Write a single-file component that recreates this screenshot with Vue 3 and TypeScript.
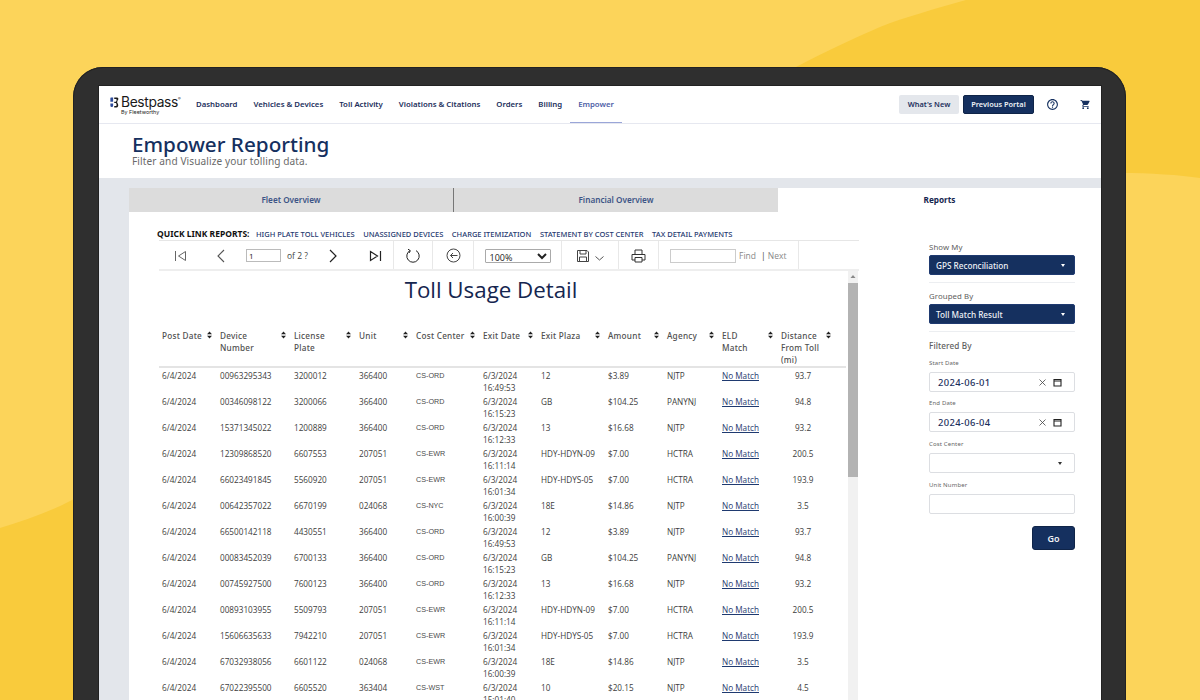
<script setup lang="ts">
interface Row {
  device: string; plate: string; unit: string; center: string; time: string;
  plaza: string; amount: string; agency: string; distance: string;
}
const nav: string[] = ['Dashboard', 'Vehicles & Devices', 'Toll Activity', 'Violations & Citations', 'Orders', 'Billing'];
const quickLinks: string[] = ['High Plate Toll Vehicles', 'Unassigned Devices', 'Charge Itemization', 'Statement by Cost Center', 'Tax Detail Payments'];
const columns: { label: string; cls: string }[] = [
  { label: 'Post Date', cls: 'c1' }, { label: 'Device Number', cls: 'c2' }, { label: 'License Plate', cls: 'c3' },
  { label: 'Unit', cls: 'c4' }, { label: 'Cost Center', cls: 'c5' }, { label: 'Exit Date', cls: 'c6' },
  { label: 'Exit Plaza', cls: 'c7' }, { label: 'Amount', cls: 'c8' }, { label: 'Agency', cls: 'c9' },
  { label: 'ELD Match', cls: 'c10' }, { label: 'Distance From Toll (mi)', cls: 'c11' },
];
const r = (device: string, plate: string, unit: string, center: string, time: string, plaza: string, amount: string, agency: string, distance: string): Row =>
  ({ device, plate, unit, center, time, plaza, amount, agency, distance });
const rows: Row[] = [
  r('00963295343', '3200012', '366400', 'CS-ORD', '16:49:53', '12', '$3.89', 'NJTP', '93.7'),
  r('00346098122', '3200066', '366400', 'CS-ORD', '16:15:23', 'GB', '$104.25', 'PANYNJ', '94.8'),
  r('15371345022', '1200889', '366400', 'CS-ORD', '16:12:33', '13', '$16.68', 'NJTP', '93.2'),
  r('12309868520', '6607553', '207051', 'CS-EWR', '16:11:14', 'HDY-HDYN-09', '$7.00', 'HCTRA', '200.5'),
  r('66023491845', '5560920', '207051', 'CS-EWR', '16:01:34', 'HDY-HDYS-05', '$7.00', 'HCTRA', '193.9'),
  r('00642357022', '6670199', '024068', 'CS-NYC', '16:00:39', '18E', '$14.86', 'NJTP', '3.5'),
  r('66500142118', '4430551', '366400', 'CS-ORD', '16:49:53', '12', '$3.89', 'NJTP', '93.7'),
  r('00083452039', '6700133', '366400', 'CS-ORD', '16:15:23', 'GB', '$104.25', 'PANYNJ', '94.8'),
  r('00745927500', '7600123', '366400', 'CS-ORD', '16:12:33', '13', '$16.68', 'NJTP', '93.2'),
  r('00893103955', '5509793', '207051', 'CS-EWR', '16:11:14', 'HDY-HDYN-09', '$7.00', 'HCTRA', '200.5'),
  r('15606635633', '7942210', '207051', 'CS-EWR', '16:01:34', 'HDY-HDYS-05', '$7.00', 'HCTRA', '193.9'),
  r('67032938056', '6601122', '024068', 'CS-EWR', '16:00:39', '18E', '$14.86', 'NJTP', '3.5'),
  r('67022395500', '6605520', '363404', 'CS-WST', '15:01:40', '10', '$20.15', 'NJTP', '4.5'),
];
</script>

<template>
  <div class="stage">
    <svg class="backdrop" width="1200" height="700" viewBox="0 0 1200 700" aria-hidden="true">
      <path d="M0 0H966C935 9 905 17 880 27C850 40 822 53 796 67L780 130L72 500C50 512 25 520 0 528Z" fill="#fcd45a" />
      <path d="M1120 173C1150 173 1180 175 1200 178V700H1120Z" fill="#fcd45a" />
    </svg>

    <div class="device">
      <div class="screen">
        <header class="topbar">
          <div class="logo">
            <svg class="logo-mark" width="9" height="11" viewBox="0 0 9 12" aria-hidden="true">
              <path d="M0 1.200Q0 .5 .7 .5H3V5.200H0zM0 7h3v2.500Q3 11 1.500 11T0 9.500z" fill="#2c4a9a" />
              <path d="M4.200.5H7c2 0 2.200 2.200 1 3L7.300 5.700 8.300 7.600C9.200 9.600 8 11.500 6.600 11.500H4.200V9.800H6.300C7 9.800 7 7.200 6 6.600H4.200V5.100H6C7 4.600 7 2.200 6.300 2.200H4.200Z" fill="#1a1a1a" />
            </svg>
            <div class="logo-words">
              <span class="logo-name">Bestpass<sup>®</sup></span>
              <span class="logo-by">By Fleetworthy</span>
            </div>
          </div>
          <nav class="nav">
            <a v-for="item in nav" :key="item" class="nav-item">{{ item }}</a>
            <a class="nav-item active">Empower</a>
          </nav>
          <div class="actions">
            <button class="btn-light">What's New</button>
            <button class="btn-navy">Previous Portal</button>
            <svg class="help" width="13" height="13" viewBox="0 0 24 24" fill="#15305f" aria-hidden="true">
              <path d="M11 18h2v-2h-2v2zm1-16C6.480 2 2 6.480 2 12s4.480 10 10 10 10-4.480 10-10S17.520 2 12 2zm0 18c-4.410 0-8-3.590-8-8s3.590-8 8-8 8 3.590 8 8-3.590 8-8 8zm0-14c-2.210 0-4 1.790-4 4h2c0-1.100.9-2 2-2s2 .9 2 2c0 2-3 1.750-3 5h2c0-2.250 3-2.500 3-5 0-2.210-1.790-4-4-4z" />
            </svg>
            <svg class="cart" width="11" height="11" viewBox="0 0 24 24" fill="#15305f" aria-hidden="true">
              <path d="M7 18c-1.100 0-1.990.9-1.990 2S5.900 22 7 22s2-.9 2-2-.9-2-2-2zM1 2v2h2l3.600 7.590-1.350 2.450c-.16.28-.25.61-.25.96 0 1.100.9 2 2 2h12v-2H7.420c-.14 0-.25-.11-.25-.25l.03-.12.9-1.630h7.450c.75 0 1.410-.41 1.750-1.030l3.580-6.490c.08-.14.12-.31.12-.48 0-.55-.45-1-1-1H5.210l-.94-2H1zm16 16c-1.100 0-1.990.9-1.990 2s.89 2 1.990 2 2-.9 2-2-.9-2-2-2z" />
            </svg>
          </div>
        </header>

        <section class="title-band">
          <h1>Empower Reporting</h1>
          <p>Filter and Visualize your tolling data.</p>
        </section>

        <div class="body">
          <div class="sheet">
            <div class="tabs">
              <div class="tab tab-one">Fleet Overview</div>
              <div class="tab tab-two">Financial Overview</div>
              <div class="tab tab-active">Reports</div>
            </div>

            <div class="content">
              <div class="report-col">
                <div class="quick">
                  <strong>QUICK LINK REPORTS:</strong>
                  <a v-for="l in quickLinks" :key="l">{{ l }}</a>
                </div>

                <div class="toolbar">
                  <div class="cell pager">
                    <svg class="t-first" width="13" height="12" viewBox="0 0 13 12" aria-hidden="true"><path d="M1.500 1v10M11.500 1.500L4.500 6l7 4.500z" fill="none" stroke="#666" /></svg>
                    <svg class="t-prev" width="10" height="14" viewBox="0 0 10 14" aria-hidden="true"><path d="M8 1L2 7l6 6" fill="none" stroke="#555" stroke-width="1.100" /></svg>
                    <input class="page-input" value="1" aria-label="Page" />
                    <span class="of">of 2 ?</span>
                    <svg class="t-next" width="10" height="14" viewBox="0 0 10 14" aria-hidden="true"><path d="M2 1l6 6-6 6" fill="none" stroke="#222" stroke-width="1.200" /></svg>
                    <svg class="t-last" width="13" height="12" viewBox="0 0 13 12" aria-hidden="true"><path d="M1.500 1.500l7 4.500-7 4.500zM11.500 1v10" fill="none" stroke="#222" stroke-width="1.200" /></svg>
                  </div>
                  <div class="cell w39">
                    <svg width="16" height="16" viewBox="0 0 16 16" aria-hidden="true"><path d="M5 2.600A6.200 6.200 0 1 0 11 2.600M3 1.200L5.400 2.700 4 5" fill="none" stroke="#222" /></svg>
                  </div>
                  <div class="cell w41">
                    <svg width="15" height="15" viewBox="0 0 15 15" aria-hidden="true"><circle cx="7.500" cy="7.500" r="6.500" fill="none" stroke="#444" /><path d="M11.500 7.500h-7M7 5L4.500 7.500 7 10" fill="none" stroke="#444" /></svg>
                  </div>
                  <div class="cell w88">
                    <select class="zoom" aria-label="Zoom"><option>100%</option></select>
                  </div>
                  <div class="cell w57">
                    <svg width="14" height="14" viewBox="0 0 14 14" aria-hidden="true"><path d="M1.500 1.500h9.500l1.500 1.500v9.500h-11zM4 1.500v3.500h6V1.500M3.500 12.500V8h7v4.500" fill="none" stroke="#444" /></svg>
                    <svg class="chev" width="9" height="5" viewBox="0 0 9 5" aria-hidden="true"><path d="M.5.5l4 3.500 4-3.500" fill="none" stroke="#555" /></svg>
                  </div>
                  <div class="cell w40">
                    <svg width="15" height="14" viewBox="0 0 15 14" aria-hidden="true"><path d="M4 5V1h7v4M4 11H1V5.500h13V11h-3M4 8.500h7v4.500H4z" fill="none" stroke="#333" /></svg>
                  </div>
                  <div class="cell find">
                    <input class="find-input" aria-label="Find" />
                    <span class="find-text">Find</span>
                    <span class="find-next"><i>|</i> Next</span>
                  </div>
                </div>

                <div class="report">
                  <div class="report-main">
                    <h2>Toll Usage Detail</h2>
                    <table>
                      <colgroup>
                        <col v-for="c in columns" :key="c.cls" :class="c.cls" />
                      </colgroup>
                      <thead>
                        <tr>
                          <th v-for="c in columns" :key="c.label" :class="c.cls">
                            <div class="th-in">
                              <span>{{ c.label }}</span>
                              <svg width="5" height="8" viewBox="0 0 5 8" aria-hidden="true"><path d="M2.500.5L5 3.200H0zM2.500 7.500L0 4.800h5z" fill="#222" /></svg>
                            </div>
                          </th>
                        </tr>
                      </thead>
                      <tbody>
                        <tr v-for="row in rows" :key="row.device">
                          <td>6/4/2024</td>
                          <td>{{ row.device }}</td>
                          <td>{{ row.plate }}</td>
                          <td>{{ row.unit }}</td>
                          <td class="center-code">{{ row.center }}</td>
                          <td>6/3/2024<br />{{ row.time }}</td>
                          <td>{{ row.plaza }}</td>
                          <td>{{ row.amount }}</td>
                          <td>{{ row.agency }}</td>
                          <td><a class="match">No Match</a></td>
                          <td class="dist">{{ row.distance }}</td>
                        </tr>
                      </tbody>
                    </table>
                  </div>
                  <div class="scrollbar">
                    <svg width="10" height="11" viewBox="0 0 10 11" aria-hidden="true"><path d="M5 4l2.500 3h-5z" fill="#888" /></svg>
                    <div class="thumb"></div>
                  </div>
                </div>
              </div>

              <aside class="filters">
                <label class="lbl">Show My</label>
                <div class="select navy"><span>GPS Reconciliation</span><b class="caret"></b></div>
                <div class="rule"></div>
                <label class="lbl">Grouped By</label>
                <div class="select navy"><span>Toll Match Result</span><b class="caret"></b></div>
                <div class="rule"></div>
                <div class="lbl filtered">Filtered By</div>
                <label class="tiny first">Start Date</label>
                <div class="select date">
                  <span>2024-06-01</span>
                  <svg class="x" width="7" height="7" viewBox="0 0 7 7" aria-hidden="true"><path d="M.5.5l6 6M6.500.5l-6 6" stroke="#444" stroke-width=".8" /></svg>
                  <svg width="9" height="9" viewBox="0 0 9 9" aria-hidden="true"><path d="M1 1.500h7v6.500H1zM1 3h7" fill="none" stroke="#222" stroke-width="1.100" /></svg>
                </div>
                <label class="tiny t2">End Date</label>
                <div class="select date">
                  <span>2024-06-04</span>
                  <svg class="x" width="7" height="7" viewBox="0 0 7 7" aria-hidden="true"><path d="M.5.5l6 6M6.500.5l-6 6" stroke="#444" stroke-width=".8" /></svg>
                  <svg width="9" height="9" viewBox="0 0 9 9" aria-hidden="true"><path d="M1 1.500h7v6.500H1zM1 3h7" fill="none" stroke="#222" stroke-width="1.100" /></svg>
                </div>
                <label class="tiny">Cost Center</label>
                <div class="select plain"><span></span><b class="caret dark"></b></div>
                <label class="tiny">Unit Number</label>
                <div class="select plain"></div>
                <button class="go">Go</button>
              </aside>
            </div>
          </div>
        </div>
      </div>
    </div>
  </div>
</template>

<style>
html, body { margin: 0; padding: 0; }
</style>

<style scoped>
.stage {
  position: relative; width: 1200px; height: 700px; overflow: hidden;
  background: #f9cb3c; font-family: "Noto Sans", sans-serif; box-sizing: border-box;
  padding: 67px 0 0 73px;
}
.backdrop { position: absolute; inset: 0; }
.device {
  position: relative; width: 1053px; height: 700px; box-sizing: border-box;
  background: #2f2f2f; border-radius: 30px 30px 0 0; padding: 19px 25px 0 26px;
  box-shadow: inset 0 0 0 1px #222;
}
.screen { background: #fff; height: 100%; display: flex; flex-direction: column; box-shadow: 0 0 0 1px #222; }

.topbar { height: 37px; border-bottom: 1px solid #e6e8f0; display: flex; align-items: center; flex: none; }
.logo { display: flex; align-items: flex-start; margin-left: 11px; width: 78px; flex: none; }
.logo-mark { margin-top: 3px; margin-right: 2px; flex: none; }
.logo-words { display: flex; flex-direction: column; white-space: nowrap; }
.logo-name { font-family: Inter, sans-serif; font-size: 13.800px; line-height: 16px; color: #1a1a1a; letter-spacing: -.35px; }
.logo-name sup { font-size: 4px; vertical-align: 7px; line-height: 0; }
.logo-by { font-family: Inter, sans-serif; font-size: 5.400px; line-height: 6px; color: #222; margin-top: -1px; }
.nav { display: flex; height: 100%; }
.nav-item {
  font-size: 7.800px; font-weight: 600; color: #1c2f5c; padding: 0 8px 1px; height: 100%;
  display: flex; align-items: center; box-sizing: border-box; white-space: nowrap;
}
.nav-item.active { color: #4f5fa8; border-bottom: 1px solid #9aa6d8; padding-bottom: 0; }
.actions { margin-left: auto; display: flex; align-items: center; }
button { font-family: inherit; cursor: pointer; }
.btn-light, .btn-navy { height: 19px; border-radius: 2px; font-size: 7.400px; font-weight: 600; padding: 0 0 1px; }
.btn-light { width: 60px; background: #e4e7ec; color: #1c2f5c; border: 0; }
.btn-navy { width: 71px; background: #15305f; color: #eef1f6; border: 1px solid #0f2448; margin-left: 4px; }
.help { margin-left: 12px; }
.cart { margin-left: 21px; margin-right: 10px; }

.title-band { height: 54px; flex: none; padding-left: 33px; box-sizing: border-box; padding-top: 9px; }
.title-band h1 { margin: 0; font-size: 20.700px; line-height: 22px; font-weight: 500; color: #15305f; }
.title-band p { margin: 1px 0 0; font-size: 10.100px; line-height: 10px; color: #6a6a6a; letter-spacing: .1px; }

.body { flex: 1; background: #e3e6eb; padding: 10px 0 0 30px; min-height: 0; }
.sheet { background: #fff; height: 100%; }
.tabs { display: flex; height: 24px; }
.tab {
  display: flex; align-items: center; justify-content: center; box-sizing: border-box;
  font-size: 8.200px; font-weight: 600; color: #3c5486; background: #dcdcdc; padding-bottom: 1px;
}
.tab-one { width: 325px; border-right: 1px solid #777; }
.tab-two { width: 324px; }
.tab-active { flex: 1; background: #fff; color: #15264f; font-weight: 700; }

.content { display: flex; padding-left: 28px; }
.report-col { width: 702px; flex: none; }
.quick { display: flex; align-items: center; height: 11px; margin-top: 16px; margin-bottom: 1px; white-space: nowrap; }
.quick strong { font-size: 8.500px; font-weight: 700; color: #111; width: 99px; flex: none; }
.quick a { font-size: 7.500px; font-weight: 500; color: #1f3a70; text-transform: uppercase; margin-right: 8.600px; }

.toolbar {
  display: flex; height: 28px; margin-top: 1px; margin-left: 2px; width: 700px;
  border-top: 1px solid #e6e6e6; border-bottom: 2px solid #eee;
}
.cell { display: flex; align-items: center; justify-content: center; border-right: 1px solid #e8e8e8; box-sizing: border-box; padding-top: 1px; }
.pager { width: 235px; justify-content: flex-start; }
.t-first { margin-left: 15px; }
.t-prev { margin-left: 29px; }
.page-input {
  width: 35px; height: 13px; box-sizing: border-box; margin-left: 20px; border: 1px solid #bbb;
  font: 8px "Open Sans", sans-serif; padding: 0 2px; color: #222;
}
.of { font: 8.500px "Open Sans", sans-serif; color: #444; margin-left: 6px; width: 25px; }
.t-next { margin-left: 16px; }
.t-last { margin-left: 31px; }
.w39 { width: 39px; } .w41 { width: 41px; } .w88 { width: 88px; } .w57 { width: 57px; } .w40 { width: 40px; }
.zoom { width: 66px; height: 14px; font: 9px "Open Sans", sans-serif; padding: 0; color: #222; background: #fff; border: 1px solid #aaa; border-radius: 1px; }
.chev { margin-left: 5px; margin-top: 5px; }
.find { width: 140px; justify-content: flex-start; }
.find-input { width: 66px; height: 14px; box-sizing: border-box; border: 1px solid #ccc; margin-left: 11px; }
.find-text { font: 8.500px "Open Sans", sans-serif; color: #888; margin-left: 3px; }
.find-next { font: 8.500px "Open Sans", sans-serif; color: #888; margin-left: 5px; }
.find-next i { font-style: normal; color: #333; }

.report { display: flex; margin-left: 2px; width: 699px; }
.report-main { width: 689px; flex: none; }
h2 { margin: 4px 0 0; height: 30px; line-height: 30px; text-align: center; font-size: 22.300px; font-weight: 400; color: #15264f; padding-right: 25px; font-family: "Open Sans", sans-serif; }
table { border-collapse: collapse; table-layout: fixed; width: 687px; margin-top: 25px; }
.c1 { width: 58px; } .c2 { width: 74px; } .c3 { width: 65px; } .c4 { width: 57px; } .c5 { width: 67px; }
.c6 { width: 58px; } .c7 { width: 67px; } .c8 { width: 59px; } .c9 { width: 55px; } .c10 { width: 59px; } .c11 { width: 68px; }
th {
  text-align: left; vertical-align: top; padding: 0 0 0 3px; border-bottom: 2px solid #e4e4e4;
  font-size: 8.200px; line-height: 12px; font-weight: 500; color: #4f4f4f; letter-spacing: .25px; height: 37px; box-sizing: border-box;
}
.th-in { display: flex; justify-content: space-between; align-items: flex-start; padding-right: 5px; }
.th-in svg { flex: none; margin-top: 1px; }
th.c11 .th-in { padding-right: 15px; }
th.c6 .th-in span, th.c7 .th-in span { white-space: nowrap; }
th.c10 .th-in span { width: 30px; }
td {
  height: 26px; box-sizing: border-box; vertical-align: top; padding: 2px 0 0 3px;
  font: 8.200px/12px "Open Sans", sans-serif; color: #3d3d3d; white-space: nowrap;
}
td.center-code { font: 7.200px/12px "Liberation Sans", sans-serif; color: #4a4a4a; }
td.dist { text-align: center; padding: 2px 18px 0 0; }
.match { color: #1f3a70; text-decoration: underline; }
.scrollbar { width: 10px; height: 430px; background: #f1f1f1; flex: none; }
.scrollbar svg { display: block; }
.thumb { height: 194px; background: #b3b3b3; margin-top: 1px; }

.filters { width: 146px; margin-left: 70px; flex: none; display: flex; flex-direction: column; padding-top: 29px; }
.lbl { font-size: 7.800px; line-height: 12px; color: #5e5e5e; letter-spacing: .1px; height: 12px; }
.select { height: 20px; border-radius: 2px; box-sizing: border-box; display: flex; align-items: center; font-size: 8.200px; flex: none; }
.navy { background: #15305f; color: #eef1f6; border: 1px solid #1f3a70; padding: 0 6px; justify-content: space-between; margin-top: 2px; font-weight: 500; }
.caret { width: 0; height: 0; border-left: 2.500px solid transparent; border-right: 2.500px solid transparent; border-top: 3px solid #fff; margin-right: 3px; }
.caret.dark { border-top-color: #333; }
.rule { height: 1px; background: #eceef1; margin: 7px 0 7px; flex: none; }
.filtered { font-size: 8.200px; font-weight: 500; height: 14px; margin-top: 1px; }
.tiny { font-size: 6px; line-height: 8px; height: 8px; color: #666; margin-top: 8px; letter-spacing: .15px; }
.tiny.first { margin-top: 5px; }
.tiny.t2 { margin-top: 7px; }
.date, .plain { background: #fff; border: 1px solid #dcdee2; margin-top: 5px; height: 20px; }
.date { padding: 0 12px 0 8px; color: #1c2f5c; font-size: 9.400px; font-weight: 500; letter-spacing: .35px; }
.date span { flex: 1; }
.date .x { margin-right: 7px; }
.plain { justify-content: space-between; padding-right: 9px; padding-left: 6px; }
.go {
  width: 43px; height: 24px; align-self: flex-end; margin-top: 12px; border-radius: 3px;
  background: #15305f; color: #f0f2f6; border: 1px solid #0f2448; font-size: 9px; font-weight: 600;
}
</style>
